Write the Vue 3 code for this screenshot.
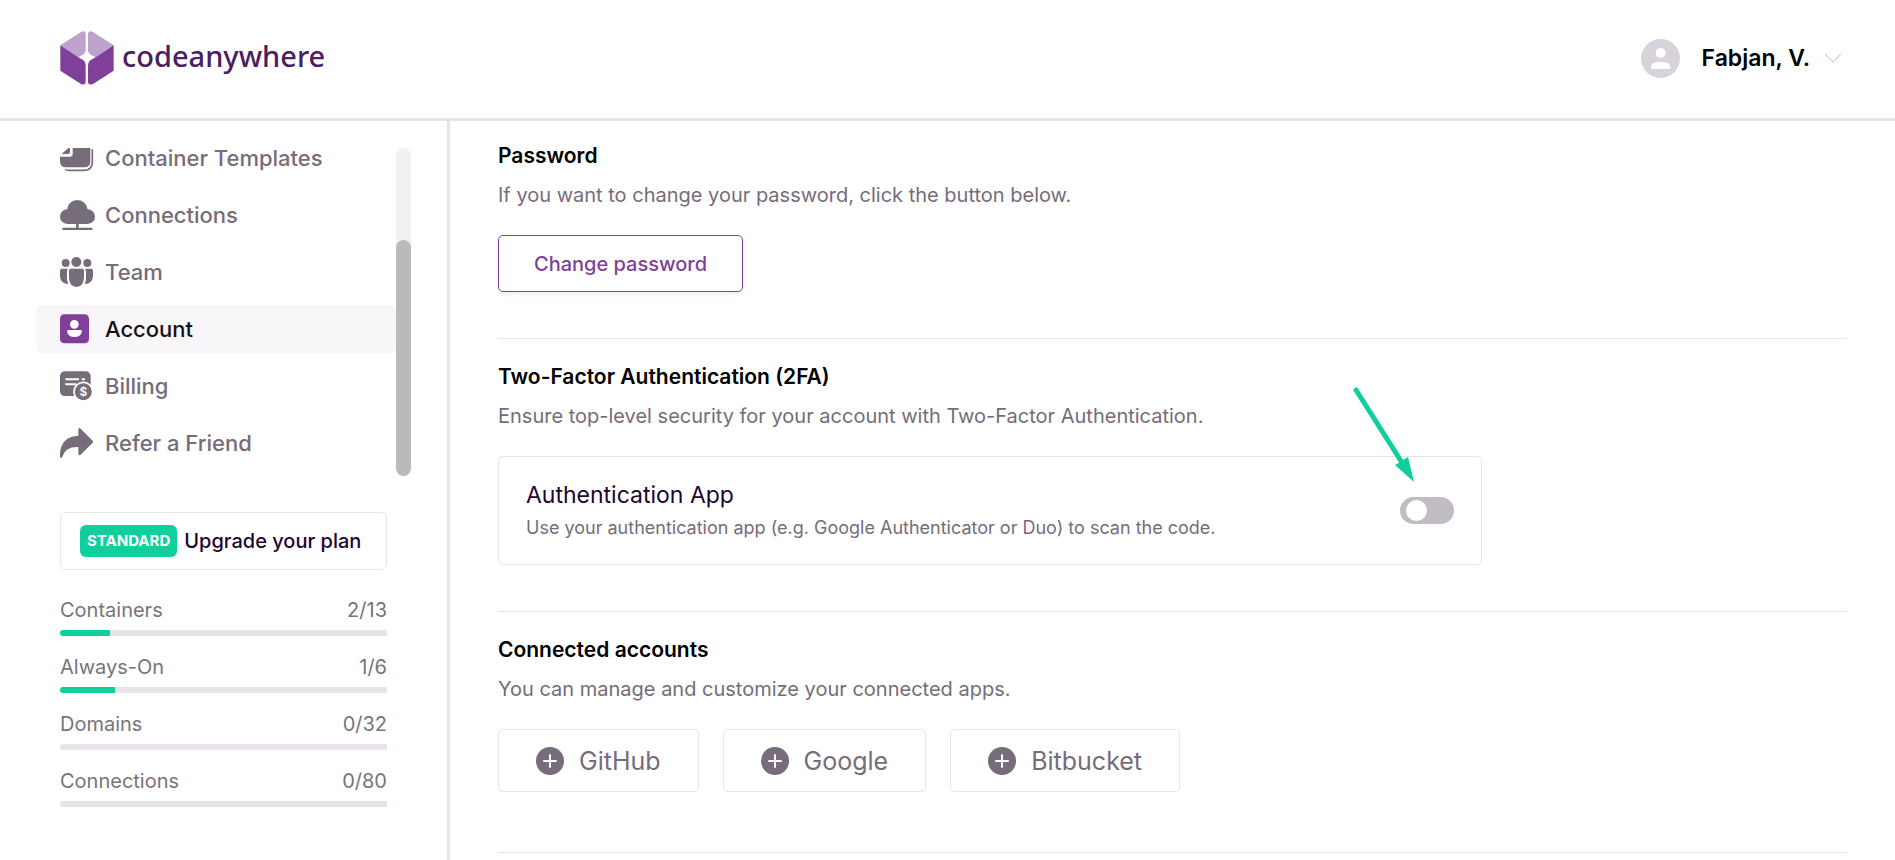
<script setup>
import { ref } from 'vue'

const nav = [
  { id: 'templates', label: 'Container Templates' },
  { id: 'connections', label: 'Connections' },
  { id: 'team', label: 'Team' },
  { id: 'account', label: 'Account', active: true },
  { id: 'billing', label: 'Billing' },
  { id: 'refer', label: 'Refer a Friend' },
]
const usage = [
  { label: 'Containers', used: 2, total: 13 },
  { label: 'Always-On', used: 1, total: 6 },
  { label: 'Domains', used: 0, total: 32 },
  { label: 'Connections', used: 0, total: 80 },
]
const providers = ['GitHub', 'Google', 'Bitbucket']
const twoFactor = ref(false)
</script>

<template>
  <div class="page">
    <header class="header">
      <a class="brand" href="#" aria-label="codeanywhere">
        <svg class="brand-mark" viewBox="0 0 162 162" aria-hidden="true">
          <path fill="#bca2cd" d="M1 43 L63 3 Q77 -3 77 10 V58 Q76 69 65 73 Q58 76 56 79 Z" />
          <path fill="#bca2cd" d="M161 43 L99 3 Q84 -3 84 10 V58 Q85 69 96 73 Q103 76 106 79 Z" />
          <path fill="#803f98" d="M1 43 L60 82 Q77 88 77 104 V151 Q77 165 63 159 L1 119 Z" />
          <path fill="#803f98" d="M161 43 L102 82 Q84 88 84 104 V151 Q84 165 99 159 L161 119 Z" />
        </svg>
        <span class="brand-name">codeanywhere</span>
      </a>
      <button class="user" type="button">
        <svg class="avatar" viewBox="0 0 117 117" aria-hidden="true">
          <circle cx="58.500" cy="58.500" r="58.500" fill="#d8d3db" />
          <circle cx="59" cy="42" r="15" fill="#fff" />
          <path fill="#fff" d="M30 90 V82 Q31 69 58 68 Q87 69 88 82 V90 Z" />
        </svg>
        <span>Fabjan, V.</span>
        <svg class="chevron" viewBox="0 0 18 10" aria-hidden="true">
          <path d="M1 1 L9 9 L17 1" fill="none" stroke="#bdb9bf" />
        </svg>
      </button>
    </header>

    <div class="body">
      <aside class="sidebar">
        <div class="nav-frame">
          <nav class="nav">
            <a v-for="item in nav" :key="item.id" href="#" class="nav-item" :class="{ active: item.active }">
              <svg class="nav-icon" viewBox="0 0 108 144" aria-hidden="true">
                <g v-if="item.id === 'templates'">
                  <path d="M38 42 H91 V82 Q91 100 73 100 H18 Q0 100 0 82 V68 H30 Q38 68 38 60 Z" />
                  <path d="M5 60 L25 42 H30 V54 Q30 60 24 60 Z" />
                  <path class="line" d="M97 46 V84 Q97 108 73 109 H28 Q20 109 16 106" />
                </g>
                <g v-else-if="item.id === 'connections'">
                  <circle cx="52" cy="58" r="31" />
                  <rect x="0" y="55" width="105" height="44" rx="22" />
                  <path d="M48 98 H56 V110 H97 V117 H7 V110 H48 Z" />
                </g>
                <g v-else-if="item.id === 'team'">
                  <circle cx="49" cy="42" r="15" />
                  <circle cx="17" cy="45" r="12" />
                  <circle cx="82" cy="45" r="12" />
                  <path d="M32 62 H67 Q72 62 72 67 V90 Q70 116 49 117 Q29 116 27 90 V67 Q27 62 32 62 Z" />
                  <path d="M6 62 H24 Q21 66 21 72 V92 Q21 100 25 108 Q2 106 0 86 V68 Q0 62 6 62 Z" />
                  <path d="M93 62 H75 Q78 66 78 72 V92 Q78 100 74 108 Q97 106 99 86 V68 Q99 62 93 62 Z" />
                </g>
                <g v-else-if="item.id === 'account'">
                  <rect y="28" width="87" height="87" rx="13" />
                  <circle class="cut" cx="43" cy="58" r="13" />
                  <path class="cut" d="M25 75 H62 Q67 75 66 80 Q62 96 43 96 Q25 96 21 80 Q20 75 25 75 Z" />
                </g>
                <g v-else-if="item.id === 'billing'">
                  <rect y="28" width="92" height="74" rx="14" />
                  <path class="rule" d="M16 52 H57 M65 52 H75 M16 67 H49" />
                  <circle class="ring" cx="70" cy="89" r="28" />
                  <text class="dollar" x="70" y="102" text-anchor="middle">$</text>
                </g>
                <path
                  v-else
                  d="M55 32 Q55 24 62 29 L98 65 Q101 68 98 71 L62 107 Q55 111 55 104 V84 Q15 83 7 113 Q4 119 0 115 Q-3 54 55 50 Z"
                />
              </svg>
              <span>{{ item.label }}</span>
            </a>
          </nav>
          <div class="track" aria-hidden="true"><div class="thumb"></div></div>
        </div>

        <a class="upgrade" href="#">
          <span class="badge">STANDARD</span>
          <span>Upgrade your plan</span>
        </a>

        <ul class="usage">
          <li v-for="u in usage" :key="u.label">
            <div class="usage-row">
              <span>{{ u.label }}</span>
              <span>{{ u.used }}/{{ u.total }}</span>
            </div>
            <div class="bar">
              <div class="fill" :style="{ width: (u.used / u.total) * 100 + '%' }"></div>
            </div>
          </li>
        </ul>
      </aside>

      <main class="main">
        <section class="section">
          <h2>Password</h2>
          <p>If you want to change your password, click the button below.</p>
          <button class="change" type="button">Change password</button>
        </section>

        <section class="section">
          <h2>Two-Factor Authentication (2FA)</h2>
          <p>Ensure top-level security for your account with Two-Factor Authentication.</p>
          <div class="card">
            <label class="card-text" for="auth-app">
              <span class="card-title">Authentication App</span>
              <span class="card-sub">Use your authentication app (e.g. Google Authenticator or Duo) to scan the code.</span>
            </label>
            <input id="auth-app" v-model="twoFactor" class="switch" type="checkbox" role="switch" />
            <svg class="arrow" viewBox="0 0 70 110" aria-hidden="true">
              <path d="M6 10 L51 81" fill="none" stroke="#0fcf9d" stroke-width="5" stroke-linecap="round" />
              <path d="M45 85 L58 77 L64 102 Z" fill="#0fcf9d" />
            </svg>
          </div>
        </section>

        <section class="section last">
          <h2>Connected accounts</h2>
          <p>You can manage and customize your connected apps.</p>
          <div class="providers">
            <button v-for="name in providers" :key="name" type="button" class="provider">
              <svg viewBox="0 0 28 28" aria-hidden="true">
                <circle cx="14" cy="14" r="14" fill="#766c7a" />
                <path d="M14 8 V20 M8 14 H20" stroke="#fff" stroke-width="2" stroke-linecap="round" />
              </svg>
              <span>{{ name }}</span>
            </button>
          </div>
        </section>
      </main>
    </div>
  </div>
</template>

<style>
body {
  margin: 0;
  background: #fff;
}
</style>

<style scoped>
.page {
  min-height: 100vh;
  display: flex;
  flex-direction: column;
  box-sizing: border-box;
  font-family: Inter, "Liberation Sans", sans-serif;
  color: #000;
}
.page *,
.page *::before {
  box-sizing: border-box;
}
a {
  color: inherit;
  text-decoration: none;
}
button {
  font-family: inherit;
  background: #fff;
  cursor: pointer;
}

.header {
  height: 121px;
  padding: 0 53px 2px 60px;
  border-bottom: 3px solid #e8e3e9;
  display: flex;
  align-items: center;
  justify-content: space-between;
}
.brand {
  display: flex;
  align-items: center;
  gap: 8px;
}
.brand-mark {
  width: 54px;
  height: 54px;
}
.brand-name {
  font: 500 29px/40px "Noto Sans", sans-serif;
  color: #4a205f;
  padding-bottom: 4px;
}
.user {
  display: flex;
  align-items: center;
  padding: 0;
  border: 0;
  font-size: 23px;
  line-height: 28px;
  font-weight: 600;
  color: #000;
}
.avatar {
  width: 39px;
  height: 39px;
  margin-right: 22px;
}
.chevron {
  width: 18px;
  height: 10px;
  margin-left: 14px;
}

.body {
  flex: 1;
  display: flex;
}
.sidebar {
  width: 450px;
  flex: none;
  padding: 27px 36px 40px;
  border-right: 3px solid #e8e3e9;
}
.nav-frame {
  height: 328px;
  display: flex;
}
.nav {
  flex: 1;
  display: flex;
  flex-direction: column;
  gap: 9px;
  margin-top: -14px;
}
.nav-item {
  flex: none;
  height: 48px;
  padding-left: 24px;
  border-radius: 6px;
  display: flex;
  align-items: center;
  gap: 9px;
  font-size: 22px;
  line-height: 24px;
  font-weight: 500;
  color: #766c7a;
}
.nav-item.active {
  background: #f8f6f9;
  color: #141216;
}
.nav-icon {
  width: 36px;
  height: 48px;
  fill: #766c7a;
}
.active .nav-icon {
  fill: #803f98;
}
.nav-icon .cut {
  fill: #fff;
}
.nav-icon .line {
  fill: none;
  stroke: #766c7a;
  stroke-width: 5;
}
.nav-icon .rule {
  stroke: #fff;
  stroke-width: 6;
}
.nav-icon .ring {
  stroke: #fff;
  stroke-width: 5;
}
.nav-icon .dollar {
  fill: #fff;
  font-size: 36px;
  font-weight: 600;
}
.track {
  width: 15px;
  height: 328px;
  border-radius: 8px;
  background: #f1f1f1;
  display: flex;
  flex-direction: column;
  justify-content: flex-end;
}
.thumb {
  height: 72%;
  border-radius: 8px;
  background: #bababa;
}
.upgrade {
  height: 58px;
  margin: 36px 24px 0;
  border: 1px solid #e6e4e7;
  border-radius: 6px;
  display: flex;
  align-items: center;
  padding-left: 19px;
  gap: 7px;
  font-size: 20px;
  font-weight: 500;
  color: #1e0530;
  white-space: nowrap;
}
.badge {
  height: 32px;
  padding: 0 7px;
  border-radius: 6px;
  background: #0fcf9d;
  color: #fff;
  font-size: 15px;
  line-height: 32px;
  font-weight: 700;
}
.usage {
  list-style: none;
  margin: 28px 24px 0;
  padding: 0;
  display: flex;
  flex-direction: column;
  gap: 19px;
  font-size: 20px;
  line-height: 24px;
  color: #77747a;
}
.usage-row {
  display: flex;
  justify-content: space-between;
  margin-bottom: 8px;
}
.bar {
  height: 6px;
  border-radius: 3px 0 0 3px;
  background: #e8e3e9;
  overflow: hidden;
}
.fill {
  height: 100%;
  background: #0fcf9d;
}

.main {
  flex: 1;
  min-width: 0;
  padding: 23px 48px 0;
}
.section {
  padding-bottom: 46px;
  border-bottom: 1px solid #e8e5e9;
}
.section + .section {
  padding-top: 26px;
}
.section.last {
  padding-bottom: 60px;
}
h2 {
  margin: 0 0 15px;
  font-size: 21px;
  line-height: 24px;
  font-weight: 600;
}
p {
  margin: 0 0 28px;
  font-size: 20px;
  line-height: 24px;
  color: #766c7a;
}
.change {
  display: block;
  height: 57px;
  padding: 0 35px;
  border: 1px solid #803f98;
  border-radius: 5px;
  box-shadow: 0 3px 5px rgba(0, 0, 0, 0.06);
  font-size: 20px;
  font-weight: 500;
  color: #803f98;
}
.card {
  position: relative;
  max-width: 984px;
  height: 109px;
  padding: 0 27px;
  border: 1px solid #e6e4e7;
  border-radius: 5px;
  display: flex;
  align-items: center;
  justify-content: space-between;
}
.card-text {
  display: flex;
  flex-direction: column;
  gap: 10px;
}
.card-title {
  font-size: 23px;
  line-height: 24px;
  color: #1e0530;
}
.card-sub {
  font-size: 18px;
  line-height: 22px;
  color: #766c7a;
}
.switch {
  appearance: none;
  flex: none;
  width: 54px;
  height: 27px;
  margin: 0;
  padding: 3px 6px;
  border-radius: 14px;
  background: #c1bbc3;
  display: flex;
  cursor: pointer;
}
.switch::before {
  content: "";
  width: 21px;
  height: 21px;
  border-radius: 50%;
  background: #fff;
}
.switch:checked {
  background: #0fcf9d;
  justify-content: flex-end;
}
.arrow {
  position: absolute;
  top: -77px;
  right: 61px;
  width: 70px;
  height: 110px;
  pointer-events: none;
}
.providers {
  display: flex;
  gap: 24px;
}
.provider {
  height: 63px;
  padding: 0 37px;
  border: 1px solid #e6e4e7;
  border-radius: 5px;
  display: flex;
  align-items: center;
  gap: 15px;
  font-size: 25px;
  color: #766c7a;
}
.provider svg {
  width: 28px;
  height: 28px;
}
</style>
